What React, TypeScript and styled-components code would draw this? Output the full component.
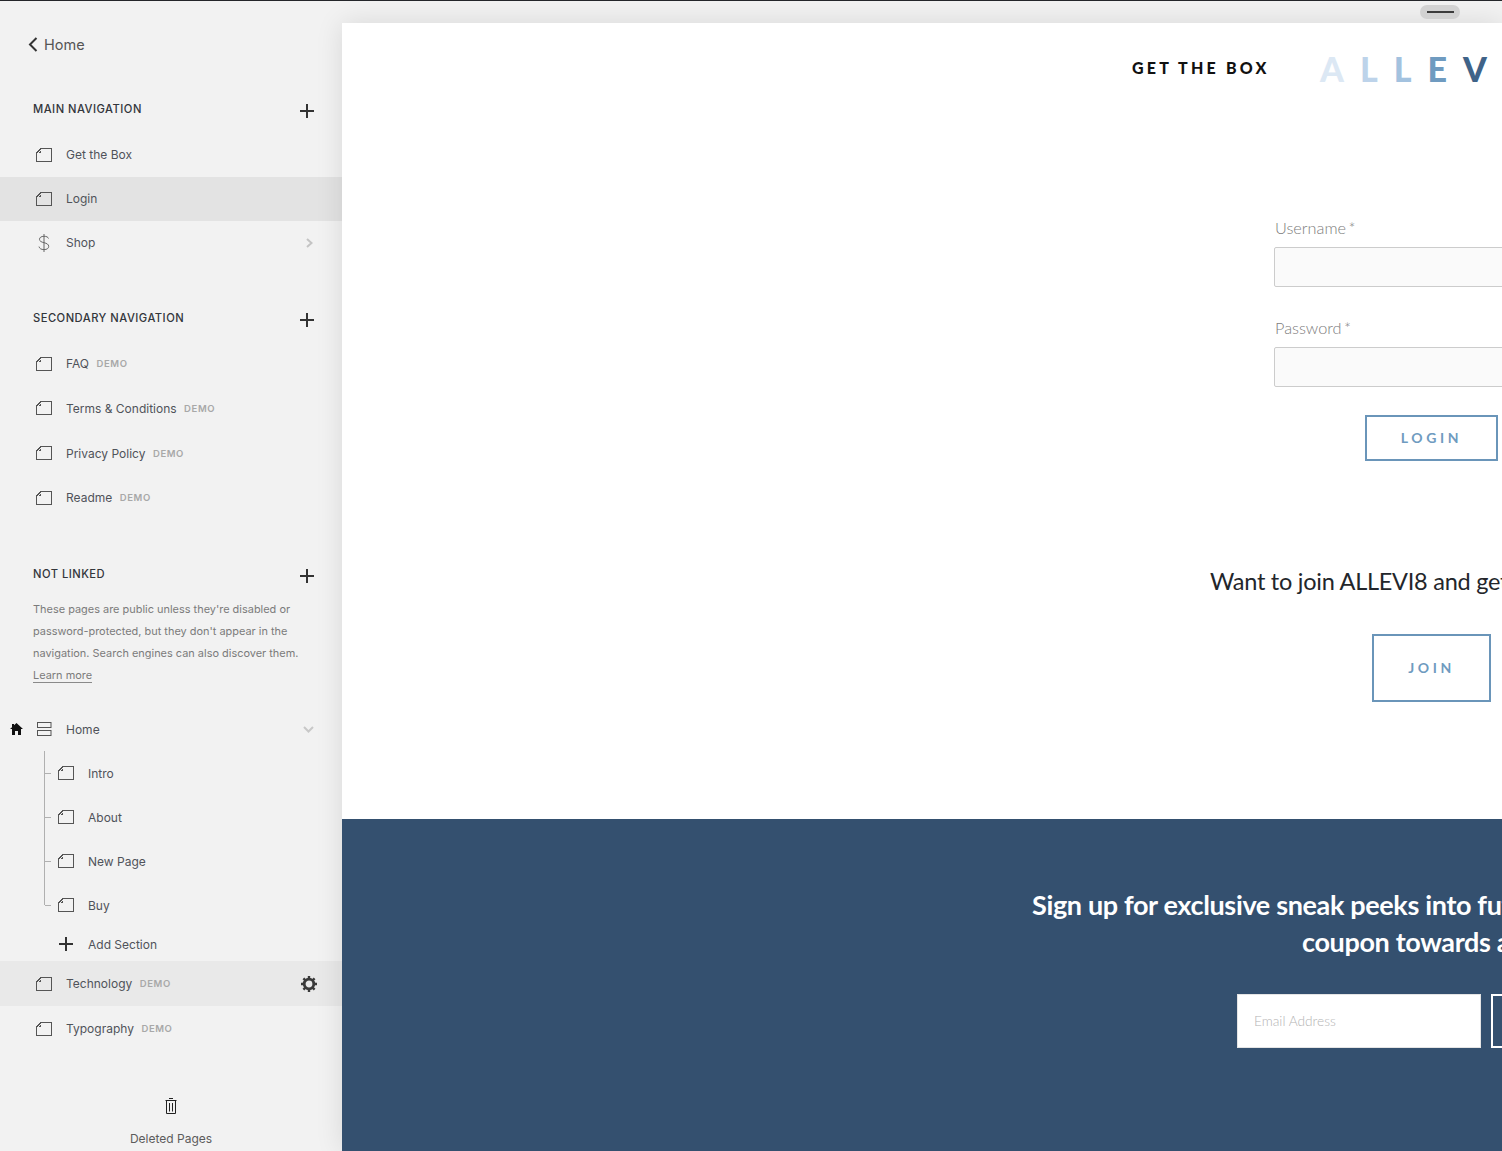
import React from 'react';
import styled, { createGlobalStyle } from 'styled-components';

const GlobalStyle = createGlobalStyle`
  html, body {
    margin: 0;
    padding: 0;
    background: #f2f2f2;
  }
  * {
    box-sizing: border-box;
  }
`;

const UI_FONT = `Inter, "Liberation Sans", Arial, sans-serif`;
const SITE_FONT = `Lato, "Open Sans", "Liberation Sans", sans-serif`;

const Page = styled.div`
  width: 1502px;
  height: 1151px;
  overflow: hidden;
  border-top: 1px solid #24262a;
  display: flex;
  background: #f2f2f2;
  font-family: ${UI_FONT};
`;

const Sidebar = styled.aside`
  flex: 0 0 342px;
  height: 100%;
  color: #444;
`;

const BackLink = styled.a`
  display: flex;
  align-items: center;
  gap: 6px;
  height: 87px;
  padding: 0 0 1px 28px;
  font-size: 14.5px;
  color: #555;
`;

const SectionHead = styled.div`
  display: flex;
  align-items: center;
  justify-content: space-between;
  height: 45px;
  padding: 0 28px 3px 33px;
  font-size: 11.2px;
  font-weight: 500;
  letter-spacing: 0.48px;
  text-transform: uppercase;
  color: #33363b;

  svg {
    margin-top: 4px;
  }
`;

const RowList = styled.div<{ $gapTop?: number }>`
  margin-top: ${(p) => p.$gapTop ?? 0}px;
`;

const Row = styled.div<{ $height?: number; $active?: boolean; $soft?: boolean; $indent?: number }>`
  position: relative;
  display: flex;
  align-items: center;
  height: ${(p) => p.$height ?? 44}px;
  padding: 0 25px 0.6px ${(p) => p.$indent ?? 36}px;
  font-size: 12px;
  color: #50535a;
  background: ${(p) => (p.$active ? '#e3e3e3' : p.$soft ? '#e9e9e9' : 'transparent')};
`;

const IconBox = styled.span<{ $width?: number }>`
  display: inline-flex;
  align-items: center;
  flex: 0 0 ${(p) => p.$width ?? 30}px;
  color: #555;
`;

const Demo = styled.span`
  margin-left: 7.5px;
  font-size: 9.5px;
  font-weight: 600;
  letter-spacing: 0.6px;
  color: #a8a8a8;
`;

const Trailing = styled.span<{ $inset?: number }>`
  margin-left: auto;
  margin-right: ${(p) => p.$inset ?? 0}px;
  display: inline-flex;
  align-items: center;
`;

const Help = styled.p`
  margin: 0;
  padding: 0 30px 0 33px;
  font-size: 10.95px;
  line-height: 22px;
  color: #7b7b7b;
`;

const LearnMore = styled.a`
  display: inline-block;
  line-height: 14px;
  border-bottom: 1px solid #8a8a8a;
  color: #7b7b7b;
`;

const Tree = styled.div`
  position: relative;

  &::before {
    content: '';
    position: absolute;
    left: 44px;
    top: 0;
    height: 154px;
    width: 1px;
    background: #b0b0b0;
  }
`;

const TreeTick = styled.span`
  position: absolute;
  left: 45px;
  top: 50%;
  width: 6px;
  height: 1px;
  background: #b0b0b0;
`;

const Deleted = styled.div`
  display: flex;
  flex-direction: column;
  align-items: center;
  gap: 17px;
  margin-top: 46.5px;
  font-size: 12px;
  color: #5c5c5c;
`;

const PreviewColumn = styled.div`
  position: relative;
  flex: 1;
  min-width: 0;
  display: flex;
  flex-direction: column;
`;

const TopStrip = styled.div`
  flex: 0 0 22px;
  padding: 4px 0 0 1078px;
`;

const Handle = styled.div`
  position: relative;
  z-index: 1;
  display: flex;
  align-items: center;
  justify-content: center;
  width: 40px;
  height: 14px;
  border-radius: 7px;
  background: #d2d2d2;

  &::before {
    content: '';
    width: 27px;
    height: 2px;
    background: #3c3c3c;
  }
`;

// the preview panel throws a soft shadow on the grey chrome round it
const PreviewFrame = styled.div`
  flex: 1;
  display: flex;
  flex-direction: column;
  min-height: 0;
  overflow: hidden;
  box-shadow: 0 0 26px rgba(0, 0, 0, 0.11);
`;

const WhiteSection = styled.section`
  flex: 0 0 796px;
  background: #fff;
  font-family: ${SITE_FONT};
  overflow: hidden;
`;

const SiteHeader = styled.header`
  display: flex;
  align-items: center;
  height: 90px;
  padding: 0 0 0 790px;
`;

const NavLink = styled.a`
  width: 188px;
  margin-top: -2px;
  font-size: 16px;
  font-weight: 900;
  letter-spacing: 3.2px;
  white-space: nowrap;
  color: #111;
`;

const Logo = styled.div`
  display: flex;
  gap: 16px;
  margin-top: 1px;
  font-size: 34px;
  font-weight: 900;
  line-height: 1;
`;

const LogoLetter = styled.span<{ $color: string }>`
  color: ${(p) => p.$color};
`;

const FormBlock = styled.div`
  width: 300px;
  margin: 103px 0 0 932px;
`;

const FieldLabel = styled.label`
  display: block;
  height: 31px;
  padding-left: 1px;
  font-size: 16.3px;
  font-weight: 300;
  word-spacing: -2px;
  line-height: 24px;
  white-space: nowrap;
  color: #7d7d7d;
`;

const TextField = styled.div<{ $gapBelow: number }>`
  height: 40px;
  margin-bottom: ${(p) => p.$gapBelow}px;
  border: 1px solid #ccc;
  border-radius: 2px;
  background: #fafafa;
`;

const OutlineButton = styled.a<{ $width: number; $height: number; $left: number; $top?: number }>`
  display: flex;
  align-items: center;
  justify-content: center;
  width: ${(p) => p.$width}px;
  height: ${(p) => p.$height}px;
  margin: ${(p) => p.$top ?? 0}px 0 0 ${(p) => p.$left}px;
  padding-bottom: 2px;
  border: 2px solid #6a95b9;
  font-size: 14px;
  font-weight: 700;
  letter-spacing: 3.6px;
  color: #6f9bc0;
`;

const JoinText = styled.p`
  margin: 103px 0 0 868px;
  font-size: 23.5px;
  letter-spacing: -0.25px;
  line-height: 34px;
  white-space: nowrap;
  color: #23262b;
`;

const BlueSection = styled.section`
  flex: 1;
  padding-top: 67px;
  background: #34506f;
  color: #fff;
  font-family: ${SITE_FONT};
  overflow: hidden;
`;

const Headline = styled.h2<{ $left: number }>`
  margin: 0 0 0 ${(p) => p.$left}px;
  font-size: 27px;
  font-weight: 700;
  letter-spacing: -0.35px;
  line-height: 37px;
  white-space: nowrap;
`;

const SignupRow = styled.div`
  display: flex;
  gap: 10px;
  margin: 34px 0 0 895px;
`;

const EmailField = styled.div`
  display: flex;
  align-items: center;
  flex: 0 0 244px;
  height: 54px;
  padding: 0 0 2px 16px;
  background: #fff;
  border: 1px solid #e4e4e4;
  font-size: 13.7px;
  font-weight: 300;
  color: #b4b4b4;
`;

const SubmitBox = styled.div`
  flex: 0 0 200px;
  height: 54px;
  border: 2px solid #fff;
`;

const PageIcon = () => (
  <svg width="16" height="14" viewBox="0 0 16 14" fill="none" stroke="#555" strokeWidth="1" shapeRendering="crispEdges">
    <path d="M.5 13.5V5L5 .5H15.5V13.5Z" />
    <path d="M3 4.5H4.5V3" />
  </svg>
);

const SectionsIcon = () => (
  <svg width="15" height="15" viewBox="0 0 15 15" fill="none" stroke="#555" strokeWidth="1">
    <rect x=".5" y=".5" width="13.5" height="5" />
    <rect x=".5" y="8.5" width="13.5" height="5" />
  </svg>
);

const DollarIcon = () => (
  <svg width="16" height="18" viewBox="0 0 16 18" fill="none" stroke="#666" strokeWidth="1">
    <path d="M12.5 4.5C12 3 10.5 2.3 8 2.3 5.2 2.3 3.5 3.5 3.5 5.3 3.5 7.2 5.3 8 8 8.7 10.8 9.4 12.7 10.3 12.7 12.4 12.7 14.4 10.9 15.6 8 15.6 5.2 15.6 3.4 14.5 3 12.6" />
    <path d="M8 0V18" />
  </svg>
);

const HomeIcon = () => (
  <svg width="13" height="12" viewBox="0 0 13 12" fill="#111">
    <path d="M6.5 0 13 6H11V12H8V8H5V12H2V6H0L2 4.2V1H4V2.3Z" />
  </svg>
);

const PlusIcon = () => (
  <svg width="14" height="14" viewBox="0 0 14 14" stroke="#333" strokeWidth="2" fill="none">
    <path d="M7 0V14M0 7H14" />
  </svg>
);

const ChevronRight = () => (
  <svg width="7" height="10" viewBox="0 0 7 10" fill="none" stroke="#c4c4c4" strokeWidth="2">
    <path d="M1 1 5.5 5 1 9" />
  </svg>
);

const ChevronDown = () => (
  <svg width="11" height="7" viewBox="0 0 11 7" fill="none" stroke="#c8c8c8" strokeWidth="2">
    <path d="M1 1 5.5 5.5 10 1" />
  </svg>
);

const ChevronLeft = () => (
  <svg width="10" height="15" viewBox="0 0 10 15" fill="none" stroke="#333" strokeWidth="2">
    <path d="M8.5 1 2 7.5 8.5 14" />
  </svg>
);

const GearIcon = () => (
  <svg width="16" height="16" viewBox="0 0 16 16" fill="none" stroke="#3a3a3a">
    <circle cx="8" cy="8" r="4.8" strokeWidth="2.8" />
    <path
      strokeWidth="2.4"
      d="M8 0V3M8 13V16M0 8H3M13 8H16M2.4 2.4 4.6 4.6M11.4 11.4 13.6 13.6M13.6 2.4 11.4 4.6M4.6 11.4 2.4 13.6"
    />
  </svg>
);

const TrashIcon = () => (
  <svg width="12" height="16" viewBox="0 0 12 16" fill="none" stroke="#222" strokeWidth="1">
    <path d="M.5 2.5H11.5M4 .5H8M1.5 2.5V15.5H10.5V2.5M4.5 5V13.5M7.5 5V13.5" />
  </svg>
);

const logoLetters: [string, string][] = [
  ['A', '#dce8f4'],
  ['L', '#bdd3ea'],
  ['L', '#a3c2df'],
  ['E', '#6f9bc0'],
  ['V', '#3f6388'],
];

const secondaryPages = ['FAQ', 'Terms & Conditions', 'Privacy Policy', 'Readme'];
const homeSections = ['Intro', 'About', 'New Page', 'Buy'];

const App = () => {
  return (
    <>
      <GlobalStyle />
      <Page>
        <Sidebar>
          <BackLink>
            <ChevronLeft />
            Home
          </BackLink>

          <SectionHead>
            Main Navigation
            <PlusIcon />
          </SectionHead>
          <Row>
            <IconBox><PageIcon /></IconBox>
            Get the Box
          </Row>
          <Row $active>
            <IconBox><PageIcon /></IconBox>
            Login
          </Row>
          <Row>
            <IconBox><DollarIcon /></IconBox>
            Shop
            <Trailing $inset={4}><ChevronRight /></Trailing>
          </Row>

          <RowList $gapTop={31.7}>
            <SectionHead>
              Secondary Navigation
              <PlusIcon />
            </SectionHead>
            {secondaryPages.map((name) => (
              <Row key={name} $height={44.67}>
                <IconBox><PageIcon /></IconBox>
                {name}
                <Demo>DEMO</Demo>
              </Row>
            ))}
          </RowList>

          <RowList $gapTop={32.3}>
            <SectionHead>
              Not Linked
              <PlusIcon />
            </SectionHead>
            <Help>
              These pages are public unless they're disabled or password-protected, but they don't appear in the
              navigation. Search engines can also discover them.
              <br />
              <LearnMore>Learn more</LearnMore>
            </Help>
          </RowList>

          <RowList $gapTop={21.7}>
            <Row $indent={10}>
              <IconBox $width={27}><HomeIcon /></IconBox>
              <IconBox $width={29}><SectionsIcon /></IconBox>
              Home
              <Trailing $inset={3}><ChevronDown /></Trailing>
            </Row>
            <Tree>
              {homeSections.map((name) => (
                <Row key={name} $indent={58}>
                  <TreeTick />
                  <IconBox><PageIcon /></IconBox>
                  {name}
                </Row>
              ))}
              <Row $height={34} $indent={59}>
                <IconBox $width={29}><PlusIcon /></IconBox>
                Add Section
              </Row>
            </Tree>
            <Row $height={45} $soft>
              <IconBox><PageIcon /></IconBox>
              Technology
              <Demo>DEMO</Demo>
              <Trailing><GearIcon /></Trailing>
            </Row>
            <Row $height={45}>
              <IconBox><PageIcon /></IconBox>
              Typography
              <Demo>DEMO</Demo>
            </Row>
          </RowList>

          <Deleted>
            <TrashIcon />
            Deleted Pages
          </Deleted>
        </Sidebar>

        <PreviewColumn>
          <TopStrip>
            <Handle />
          </TopStrip>
          <PreviewFrame>
            <WhiteSection>
              <SiteHeader>
                <NavLink>GET THE BOX</NavLink>
                <Logo>
                  {logoLetters.map(([letter, color], i) => (
                    <LogoLetter key={i} $color={color}>{letter}</LogoLetter>
                  ))}
                </Logo>
              </SiteHeader>
              <FormBlock>
                <FieldLabel>Username *</FieldLabel>
                <TextField $gapBelow={29} />
                <FieldLabel>Password *</FieldLabel>
                <TextField $gapBelow={28} />
                <OutlineButton $width={133} $height={46} $left={91}>LOGIN</OutlineButton>
              </FormBlock>
              <JoinText>Want to join ALLEVI8 and get</JoinText>
              <OutlineButton $width={119} $height={68} $left={1030} $top={36}>JOIN</OutlineButton>
            </WhiteSection>
            <BlueSection>
              <Headline $left={690}>Sign up for exclusive sneak peeks into future</Headline>
              <Headline $left={960}>coupon towards a</Headline>
              <SignupRow>
                <EmailField>Email Address</EmailField>
                <SubmitBox />
              </SignupRow>
            </BlueSection>
          </PreviewFrame>
        </PreviewColumn>
      </Page>
    </>
  );
};

export default App;
